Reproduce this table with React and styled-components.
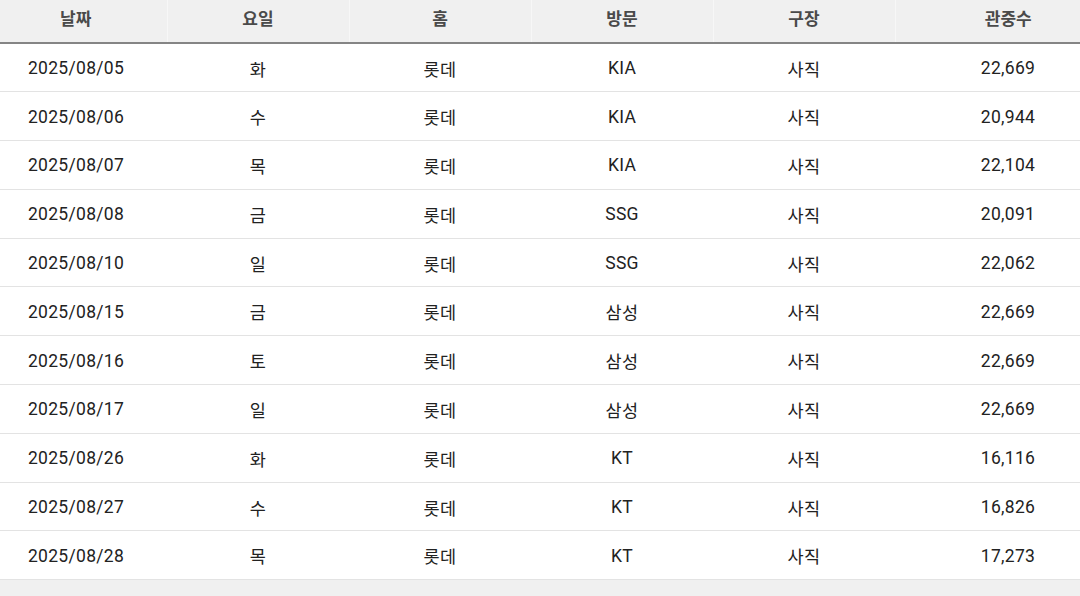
import React from "react";
import styled, { createGlobalStyle } from "styled-components";

const Global = createGlobalStyle`
  html, body { margin: 0; padding: 0; background: #f0f0f0; }
  body { font-family: Roboto, "Noto Sans CJK KR", sans-serif; }
`;

const Viewport = styled.div`
  width: 1080px;
  overflow: hidden;
`;

const Table = styled.table`
  width: 1136px;
  margin-left: -15px;
  border-collapse: collapse;
  table-layout: fixed;
  font-family: Roboto, "Noto Sans CJK KR", sans-serif;
`;

const Col = styled.col`
  width: ${(p) => p.$w}px;
`;

const HeadCell = styled.th`
  height: 43px;
  box-sizing: border-box;
  padding: 0 0 8px;
  background: #f0f0f0;
  color: #4a4a4a;
  font-size: 17px;
  font-weight: 700;
  text-align: center;
  border-bottom: 2px solid #858585;
  border-right: 1px solid #f7f7f7;
  &:last-child { border-right: none; }
`;

const Row = styled.tr`
  background: #ffffff;
`;

const Cell = styled.td`
  height: 48.8px;
  box-sizing: border-box;
  padding: 1px 0 0;
  text-align: center;
  color: #222222;
  font-size: 17.5px;
  letter-spacing: 0.3px;
  border-bottom: 1px solid #e3e3e3;
`;

const headers = ["날짜", "요일", "홈", "방문", "구장", "관중수"];
const widths = [182, 182, 182, 182, 182, 226];

const rows = [
  ["2025/08/05", "화", "롯데", "KIA", "사직", "22,669"],
  ["2025/08/06", "수", "롯데", "KIA", "사직", "20,944"],
  ["2025/08/07", "목", "롯데", "KIA", "사직", "22,104"],
  ["2025/08/08", "금", "롯데", "SSG", "사직", "20,091"],
  ["2025/08/10", "일", "롯데", "SSG", "사직", "22,062"],
  ["2025/08/15", "금", "롯데", "삼성", "사직", "22,669"],
  ["2025/08/16", "토", "롯데", "삼성", "사직", "22,669"],
  ["2025/08/17", "일", "롯데", "삼성", "사직", "22,669"],
  ["2025/08/26", "화", "롯데", "KT", "사직", "16,116"],
  ["2025/08/27", "수", "롯데", "KT", "사직", "16,826"],
  ["2025/08/28", "목", "롯데", "KT", "사직", "17,273"],
];

export default function App() {
  return (
    <Viewport>
      <Global />
      <Table>
        <colgroup>
          {widths.map((w, i) => (
            <Col key={i} $w={w} />
          ))}
        </colgroup>
        <thead>
          <tr>
            {headers.map((h) => (
              <HeadCell key={h}>{h}</HeadCell>
            ))}
          </tr>
        </thead>
        <tbody>
          {rows.map((r, i) => (
            <Row key={i}>
              {r.map((c, j) => (
                <Cell key={j}>{c}</Cell>
              ))}
            </Row>
          ))}
        </tbody>
      </Table>
    </Viewport>
  );
}
